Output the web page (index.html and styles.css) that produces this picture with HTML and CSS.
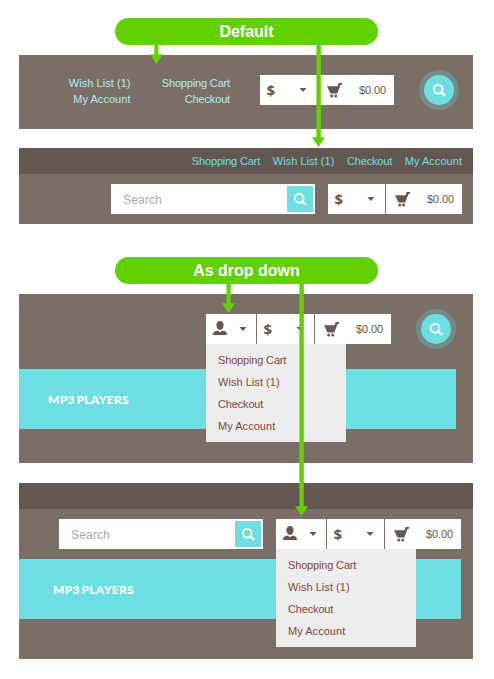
FILE: index.html
```html
<!DOCTYPE html>
<html lang="en">
<head>
<meta charset="utf-8">
<title>Header links layouts</title>
<link rel="stylesheet" href="styles.css">
</head>
<body>
<svg class="defs" width="0" height="0" aria-hidden="true">
  <symbol id="cart" viewBox="0 0 16 15"><path d="M0 3.200h10.600L11.700 0H15.300L14.600 2h-1.100L10.300 10.600H3.600L2.900 9.200 0 3.200z"/><circle cx="4.700" cy="12.900" r="1.500"/><circle cx="8.700" cy="12.900" r="1.500"/></symbol>
  <symbol id="user" viewBox="0 0 14 14"><path d="M7 0c2.300 0 3.600 1.700 3.600 4.100C10.600 6.700 9.200 9 7 9S3.400 6.700 3.400 4.100C3.400 1.700 4.700 0 7 0z"/><path d="M0 14c0-2.400.8-3.300 2.200-3.700l2.300-.8L7 11.200l2.500-1.700 2.300.8c1.400.4 2.200 1.300 2.200 3.700z"/></symbol>
  <symbol id="search" viewBox="0 0 13 13"><circle cx="5.200" cy="5.200" r="4.300" fill="none" stroke="#fff" stroke-width="1.900"/><path d="M8.300 8.300l3.700 3.700" fill="none" stroke="#fff" stroke-width="2.200"/></symbol>
  <symbol id="caret" viewBox="0 0 8 4"><path d="M.5 0h7L4 4z"/></symbol>
</svg>

<h2 class="pill">Default</h2>
<section class="panel panel-a">
  <div class="links-grid"><a>Wish List (1)</a><a class="tight">Shopping Cart</a><a>My Account</a><a class="tight">Checkout</a></div>
  <div class="tools">
    <div class="tool currency"><b>$</b><svg class="caret"><use href="#caret"/></svg></div>
    <div class="tool cart"><svg class="cart-icon"><use href="#cart"/></svg><span>$0.00</span></div>
  </div>
  <div class="round"><svg class="search-icon"><use href="#search"/></svg></div>
</section>

<section class="panel panel-b">
  <nav class="topbar"><a class="tight">Shopping Cart</a><a>Wish List (1)</a><a class="tight">Checkout</a><a>My Account</a></nav>
  <div class="row">
    <div class="search"><span>Search</span><i><svg class="search-icon"><use href="#search"/></svg></i></div>
    <div class="tools">
      <div class="tool currency"><b>$</b><svg class="caret"><use href="#caret"/></svg></div>
      <div class="tool cart"><svg class="cart-icon"><use href="#cart"/></svg><span>$0.00</span></div>
    </div>
  </div>
</section>

<h2 class="pill pill-second">As drop down</h2>
<section class="panel panel-c">
  <div class="row">
    <div class="tools">
      <div class="tool user"><svg class="user-icon"><use href="#user"/></svg><svg class="caret"><use href="#caret"/></svg></div>
      <div class="tool currency"><b>$</b><svg class="caret"><use href="#caret"/></svg></div>
      <div class="tool cart"><svg class="cart-icon"><use href="#cart"/></svg><span>$0.00</span></div>
      <div class="menu"><a class="tight">Shopping Cart</a><a>Wish List (1)</a><a class="tight">Checkout</a><a>My Account</a></div>
    </div>
    <div class="round"><svg class="search-icon"><use href="#search"/></svg></div>
  </div>
  <div class="band">MP3 PLAYERS</div>
</section>

<section class="panel panel-d">
  <nav class="topbar"></nav>
  <div class="row">
    <div class="search"><span>Search</span><i><svg class="search-icon"><use href="#search"/></svg></i></div>
    <div class="tools">
      <div class="tool user"><svg class="user-icon"><use href="#user"/></svg><svg class="caret"><use href="#caret"/></svg></div>
      <div class="tool currency"><b>$</b><svg class="caret"><use href="#caret"/></svg></div>
      <div class="tool cart"><svg class="cart-icon"><use href="#cart"/></svg><span>$0.00</span></div>
      <div class="menu"><a class="tight">Shopping Cart</a><a>Wish List (1)</a><a class="tight">Checkout</a><a>My Account</a></div>
    </div>
  </div>
  <div class="band">MP3 PLAYERS</div>
</section>

<svg class="arrows" width="494" height="679" aria-hidden="true">
  <path d="M154.300 44v10.300H150l6.400 9.700 6.400-9.700h-4.300V44z"/>
  <path d="M316.400 44v93.300H312l6.500 9.700 6.500-9.700h-4.200V44z"/>
  <path d="M226.400 283v20.300H222l6.500 9.700 6.500-9.700h-4.300V283z"/>
  <path d="M299.400 283v223.300H295l6.500 9.700 6.500-9.700h-4.200V283z"/>
</svg>
</body>
</html>
```
FILE: styles.css
```css
* { box-sizing: border-box; }
body {
  margin: 0;
  padding: 18px 21px 20px 19px;
  height: 679px;
  position: relative;
  overflow: hidden;
  background: #fff;
  font: 11px/16px "Liberation Sans", Arial, sans-serif;
  color: #665550;
}
svg { display: block; fill: #665550; }
.defs { position: absolute; }
.pill {
  width: 263px;
  height: 27px;
  margin: 0 0 10px 96px;
  border-radius: 14px;
  background: #62d100;
  color: #fff;
  font-size: 16px;
  line-height: 27px;
  text-align: center;
}
.pill-second { margin-top: 33px; }
.panel { width: 454px; background: #7b6e66; }

.panel-a { display: flex; align-items: flex-start; height: 74px; padding-top: 20px; }
.links-grid {
  display: grid;
  grid-template-columns: 111.5px 99.5px;
  width: 211px;
  margin-right: 30px;
  text-align: right;
  color: #aeeff2;
}
.panel-b { height: 76px; margin-top: 19px; }
.panel-c { height: 169px; }
.panel-d { height: 176px; margin-top: 20px; }

.links-grid a, .topbar a, .menu a { letter-spacing: 0.04px; }
.links-grid .tight, .topbar .tight, .menu .tight { letter-spacing: -0.16px; }

.topbar {
  display: flex;
  justify-content: flex-end;
  gap: 12.6px;
  height: 26px;
  padding-right: 11px;
  background: #625751;
  color: #6ddfe2;
  line-height: 26px;
}
.row { display: flex; padding-top: 10px; }
.panel-b .row { padding-left: 92px; }
.panel-c .row { padding: 20px 0 0 187px; }
.panel-d .row { padding-left: 40px; }

.search {
  display: flex;
  justify-content: space-between;
  width: 204px;
  height: 30px;
  margin-right: 13px;
  padding: 2px 2px 2px 12px;
  background: #fff;
  color: #aaa;
  font-size: 12.3px;
  line-height: 28px;
}
.search i { width: 26px; height: 26px; padding: 7px; background: #6ddfe2; }

.tools { display: flex; gap: 1px; height: 30px; position: relative; }
.tool { display: flex; align-items: center; background: #fff; }
.currency { width: 57px; padding: 0 10px 0 6.5px; justify-content: space-between; }
.currency b { font: 700 15px/30px "Open Sans", sans-serif; }
.user { width: 50px; padding: 0 9px 0 7px; justify-content: space-between; }
.cart { width: 76px; padding: 0 8px 0 9px; justify-content: space-between; }
.cart span { letter-spacing: -0.1px; }
.caret { width: 8px; height: 4px; }
.cart-icon { width: 16px; height: 15px; }
.user-icon { width: 14px; height: 14px; margin-bottom: 2px; }
.search-icon { width: 13px; height: 13px; }

.round {
  width: 40px;
  height: 40px;
  padding: 9px;
  margin: -5px 0 0 25px;
  border: 5px solid #768b87;
  border-radius: 50%;
  background: #6ddfe2;
}

.menu {
  position: absolute;
  z-index: 2;
  top: 30px;
  left: 0;
  width: 140px;
  height: 98px;
  padding: 5px 12px;
  background: #ededed;
  color: #86463d;
  line-height: 22px;
}
.menu a { display: block; }
.band {
  width: 437px;
  height: 60px;
  margin-top: 20px;
  padding-left: 29px;
  background: #6ddfe2;
  color: #fff;
  font: 900 12px/62px Lato, sans-serif;
  letter-spacing: 0.3px;
  word-spacing: -1.5px;
}
.panel-d .band { width: 442px; margin-top: 10px; padding-left: 34px; }
.arrows { position: absolute; z-index: 5; top: 0; left: 0; fill: #62d100; }
```
